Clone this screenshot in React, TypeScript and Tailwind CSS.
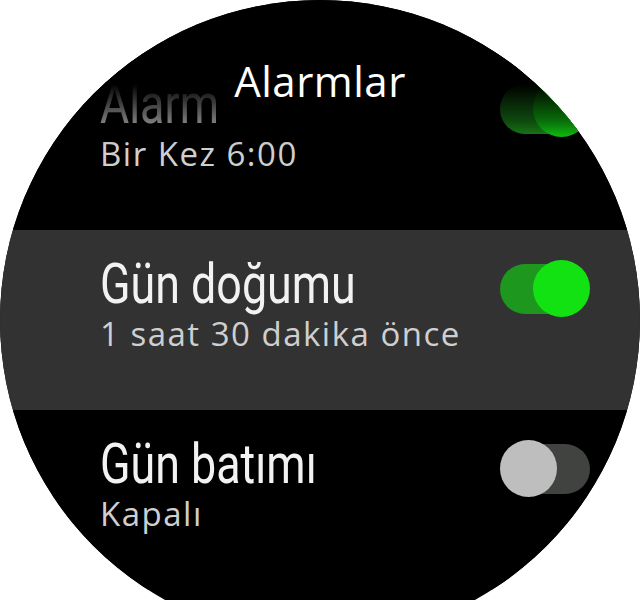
type AlarmItem = {
  title: string;
  detail: string;
  on: boolean;
  selected?: boolean;
};

const alarms: AlarmItem[] = [
  { title: "Alarm", detail: "Bir Kez 6:00", on: true },
  { title: "Gün doğumu", detail: "1 saat 30 dakika önce", on: true, selected: true },
  { title: "Gün batımı", detail: "Kapalı", on: false },
];

function Toggle({ on }: { on: boolean }) {
  if (on) {
    return (
      <div className="relative h-[57px] w-[90px] shrink-0">
        <div className="absolute left-0 top-[3.5px] h-[50px] w-[84px] rounded-full bg-[#1d971d]" />
        <div className="absolute right-0 top-0 h-[57px] w-[57px] rounded-full bg-[#12e212]" />
      </div>
    );
  }
  return (
    <div className="relative h-[57px] w-[90px] shrink-0">
      <div className="absolute right-0 top-[3.5px] h-[50px] w-[84px] rounded-full bg-[#404340]" />
      <div className="absolute left-0 top-0 h-[57px] w-[57px] rounded-full bg-[#bebebe]" />
    </div>
  );
}

function Row({ item }: { item: AlarmItem }) {
  return (
    <div
      className={`flex h-[180px] items-start pl-[100px] pr-[50px] ${
        item.selected ? "bg-[#323232]" : "bg-black"
      }`}
    >
      <div className="flex-1 pt-[24px]">
        <div className="h-[60px] whitespace-nowrap">
          {/* the watch font is narrow, so squeeze Roboto */}
          <span className="inline-block origin-left scale-x-[0.8] font-['Roboto',sans-serif] text-[56px] leading-[60px] text-[#f2f2f2]">
            {item.title}
          </span>
        </div>
        <div className="font-['Open_Sans',sans-serif] text-[33px] leading-[40px] tracking-[1.5px] text-[#cfcfcf]">
          {item.detail}
        </div>
      </div>
      <div className="mt-[30px]">
        <Toggle on={item.on} />
      </div>
    </div>
  );
}

export default function App() {
  return (
    <div className="h-[600px] w-[640px] overflow-hidden bg-white">
      <div className="relative h-[640px] w-[640px] overflow-hidden rounded-full bg-black">
        <div className="pt-[50px]">
          {alarms.map((a) => (
            <Row key={a.title} item={a} />
          ))}
        </div>
        {/* fade under the header */}
        <div className="pointer-events-none absolute inset-x-0 top-0 h-[145px] bg-gradient-to-b from-black from-[58%] via-black/50 via-[84%] to-transparent" />
        <h1 className="absolute inset-x-0 top-[56px] text-center font-['Open_Sans',sans-serif] text-[42px] leading-[50px] tracking-[0.5px] text-white">
          Alarmlar
        </h1>
      </div>
    </div>
  );
}
